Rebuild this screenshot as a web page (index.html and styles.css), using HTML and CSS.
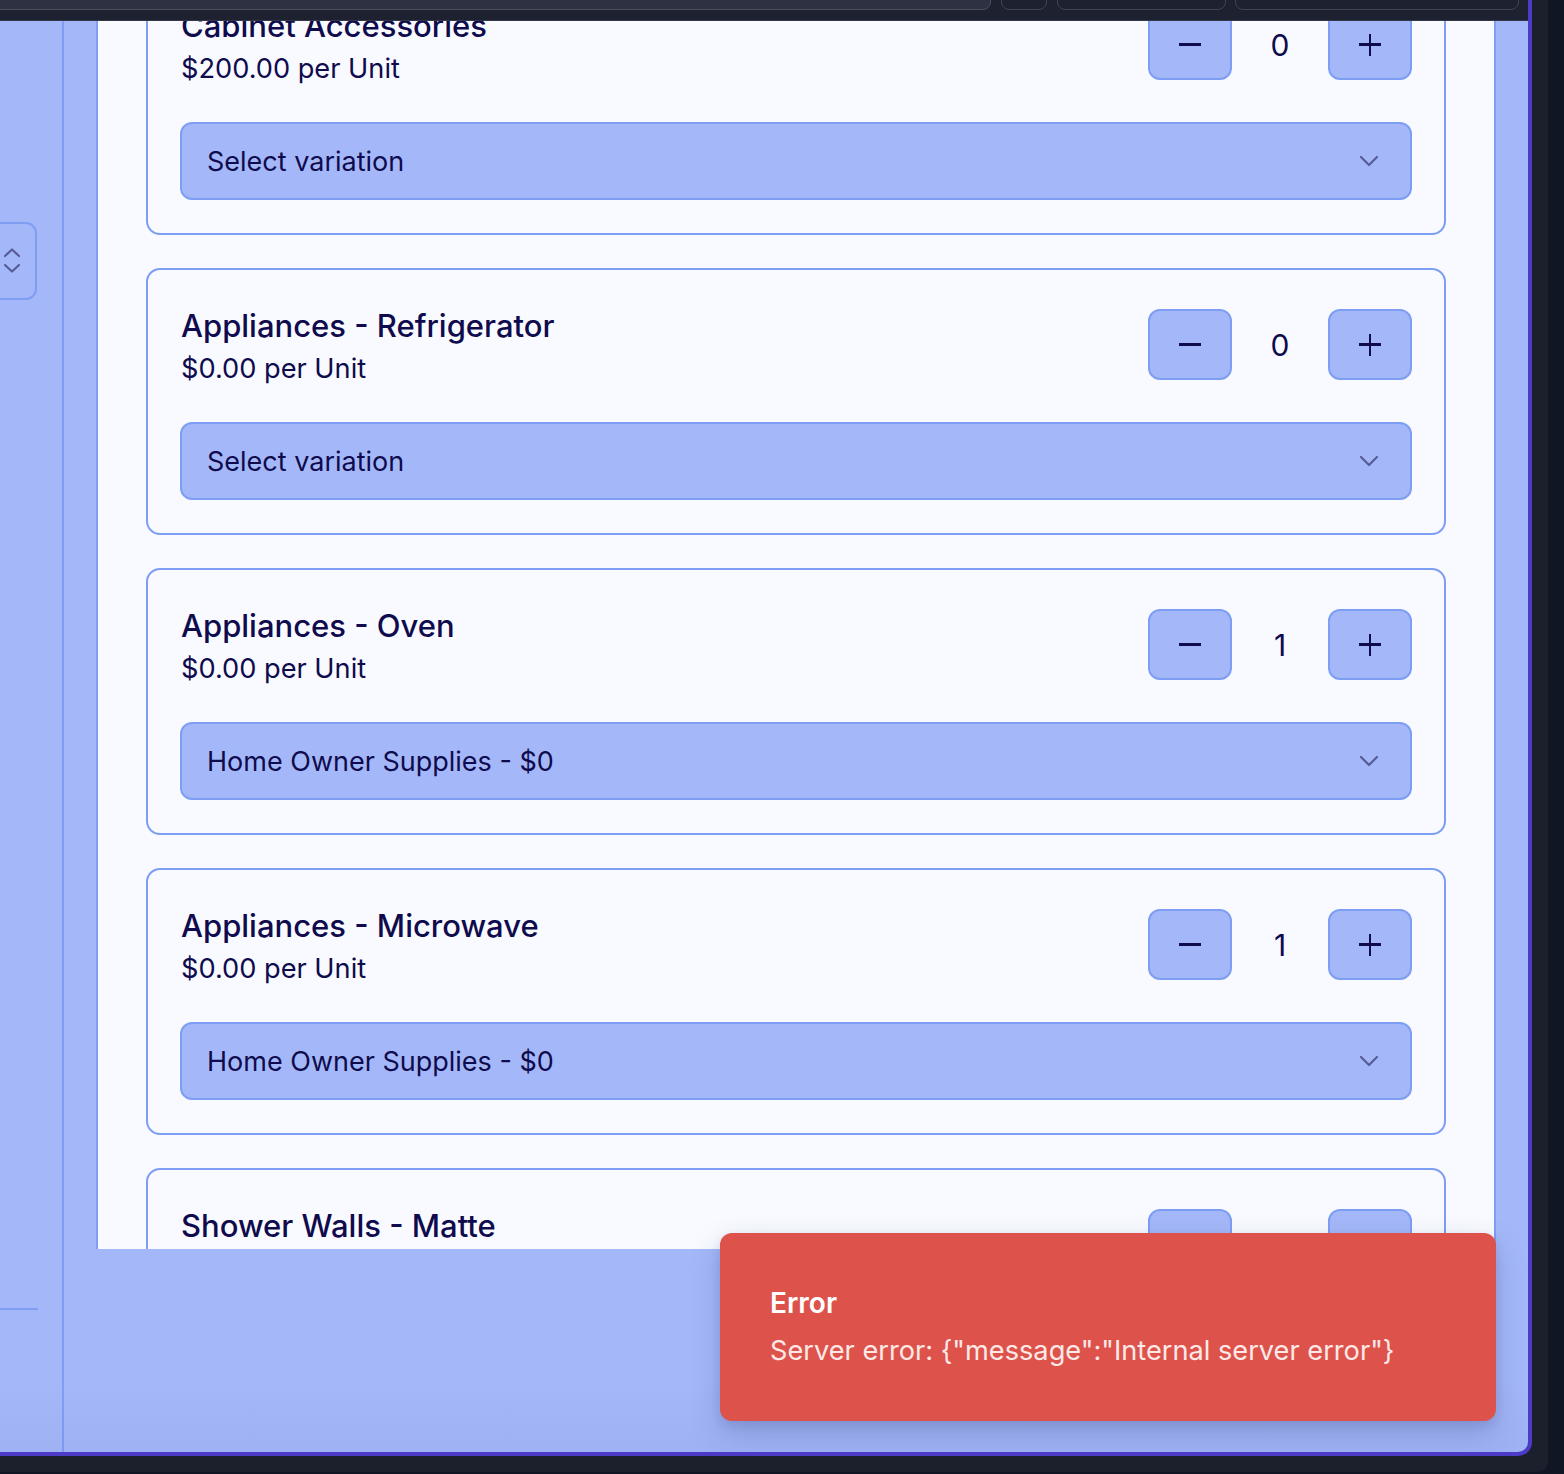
FILE: index.html
```html
<!DOCTYPE html>
<html lang="en">
<head>
<meta charset="utf-8">
<title>Order items</title>
<link rel="stylesheet" href="styles.css">
</head>
<body>
<div class="screen">
  <div class="frame">
    <div class="topbar">
      <div class="tb-box tb-wide"></div>
      <div class="tb-box tb-icon"></div>
      <div class="tb-box tb-mid"></div>
      <div class="tb-box tb-search"></div>
    </div>
    <div class="workspace">
      <aside class="sidebar">
        <div class="side-select">
          <svg class="updown" width="18" height="26" viewBox="0 0 18 26" aria-hidden="true">
            <path d="M2 8 L9 1.5 L16 8" fill="none" stroke="#585c96" stroke-width="2.2" stroke-linecap="round" stroke-linejoin="round"/>
            <path d="M2 17 L9 23.5 L16 17" fill="none" stroke="#585c96" stroke-width="2.2" stroke-linecap="round" stroke-linejoin="round"/>
          </svg>
        </div>
        <div class="side-rule"></div>
      </aside>
      <div class="gutter"></div>
      <main class="panel">
        <div class="item-list">
          <section class="item-card">
            <div class="item-head">
              <div class="item-info">
                <h3 class="item-title">Cabinet Accessories</h3>
                <p class="item-price">$200.00 per Unit</p>
              </div>
              <div class="stepper">
                <button class="step-btn" aria-label="Decrease"><span class="minus"></span></button>
                <span class="qty">0</span>
                <button class="step-btn" aria-label="Increase"><span class="plus"></span></button>
              </div>
            </div>
            <div class="variation">
              <span>Select variation</span>
              <svg class="chev" width="20" height="12" viewBox="0 0 20 12" aria-hidden="true"><path d="M2 2 L10 10 L18 2" fill="none" stroke="#585c96" stroke-width="2.2" stroke-linecap="round" stroke-linejoin="round"/></svg>
            </div>
          </section>

          <section class="item-card">
            <div class="item-head">
              <div class="item-info">
                <h3 class="item-title">Appliances - Refrigerator</h3>
                <p class="item-price">$0.00 per Unit</p>
              </div>
              <div class="stepper">
                <button class="step-btn" aria-label="Decrease"><span class="minus"></span></button>
                <span class="qty">0</span>
                <button class="step-btn" aria-label="Increase"><span class="plus"></span></button>
              </div>
            </div>
            <div class="variation">
              <span>Select variation</span>
              <svg class="chev" width="20" height="12" viewBox="0 0 20 12" aria-hidden="true"><path d="M2 2 L10 10 L18 2" fill="none" stroke="#585c96" stroke-width="2.2" stroke-linecap="round" stroke-linejoin="round"/></svg>
            </div>
          </section>

          <section class="item-card">
            <div class="item-head">
              <div class="item-info">
                <h3 class="item-title">Appliances - Oven</h3>
                <p class="item-price">$0.00 per Unit</p>
              </div>
              <div class="stepper">
                <button class="step-btn" aria-label="Decrease"><span class="minus"></span></button>
                <span class="qty">1</span>
                <button class="step-btn" aria-label="Increase"><span class="plus"></span></button>
              </div>
            </div>
            <div class="variation">
              <span>Home Owner Supplies - $0</span>
              <svg class="chev" width="20" height="12" viewBox="0 0 20 12" aria-hidden="true"><path d="M2 2 L10 10 L18 2" fill="none" stroke="#585c96" stroke-width="2.2" stroke-linecap="round" stroke-linejoin="round"/></svg>
            </div>
          </section>

          <section class="item-card">
            <div class="item-head">
              <div class="item-info">
                <h3 class="item-title">Appliances - Microwave</h3>
                <p class="item-price">$0.00 per Unit</p>
              </div>
              <div class="stepper">
                <button class="step-btn" aria-label="Decrease"><span class="minus"></span></button>
                <span class="qty">1</span>
                <button class="step-btn" aria-label="Increase"><span class="plus"></span></button>
              </div>
            </div>
            <div class="variation">
              <span>Home Owner Supplies - $0</span>
              <svg class="chev" width="20" height="12" viewBox="0 0 20 12" aria-hidden="true"><path d="M2 2 L10 10 L18 2" fill="none" stroke="#585c96" stroke-width="2.2" stroke-linecap="round" stroke-linejoin="round"/></svg>
            </div>
          </section>

          <section class="item-card">
            <div class="item-head">
              <div class="item-info">
                <h3 class="item-title">Shower Walls - Matte</h3>
                <p class="item-price">$0.00 per Unit</p>
              </div>
              <div class="stepper">
                <button class="step-btn" aria-label="Decrease"><span class="minus"></span></button>
                <span class="qty">0</span>
                <button class="step-btn" aria-label="Increase"><span class="plus"></span></button>
              </div>
            </div>
          </section>
        </div>
      </main>
      <div class="rightbar"></div>
    </div>
    <div class="bottom-shade"></div>
    <div class="toast" role="alert">
      <p class="toast-title">Error</p>
      <p class="toast-msg">Server error: {"message":"Internal server error"}</p>
    </div>
  </div>
</div>
</body>
</html>
```

FILE: styles.css
```css
* { box-sizing: border-box; }

html, body {
  margin: 0;
  padding: 0;
}

body {
  width: 1564px;
  height: 1474px;
  overflow: hidden;
  background: #111624;
  font-family: "Inter", "Noto Sans", "Liberation Sans", sans-serif;
  color: #0f0b4d;
}

.screen {
  width: 1548px;
  height: 1472px;
  background: #1c202d;
  border-bottom-right-radius: 10px;
}

.frame {
  position: relative;
  width: 1532px;
  height: 1456px;
  background: #a4b8f9;
  border-right: 4px solid #4b3bc6;
  border-bottom: 4px solid #4b3bc6;
  border-bottom-right-radius: 14px;
  overflow: hidden;
  display: flex;
  flex-direction: column;
}

/* ---------- top bar ---------- */
.topbar {
  position: relative;
  z-index: 3;
  height: 21px;
  flex: none;
  background: #1e2130;
  border-bottom: 1px solid #333747;
  display: flex;
  align-items: flex-start;
  gap: 10px;
}

.tb-box {
  height: 30px;
  margin-top: -20px;
  border: 1px solid #3f4356;
  border-radius: 8px;
  background: #1e2130;
}

.tb-wide {
  width: 1002px;
  margin-left: -11px;
  background: #2d3142;
  border-color: #4a4e60;
}

.tb-icon { width: 46px; }
.tb-mid { width: 169px; }
.tb-search { width: 284px; margin-left: -1px; }

/* ---------- workspace ---------- */
.workspace {
  flex: 1;
  display: flex;
  align-items: flex-start;
  min-height: 0;
}

.sidebar {
  width: 64px;
  height: 1431px;
  flex: none;
  border-right: 2px solid #7e9ef4;
  padding-top: 201px;
}

.side-select {
  width: 50px;
  height: 78px;
  margin-left: -13px;
  border: 2px solid #7e9ef4;
  border-radius: 11px;
  display: flex;
  align-items: center;
  padding-left: 14px;
}

.updown { display: block; }

.side-rule {
  width: 38px;
  height: 2px;
  margin-top: 1008px;
  background: #7e9ef4;
}

.gutter {
  width: 32px;
  flex: none;
}

.panel {
  width: 1400px;
  height: 1228px;
  flex: none;
  background: #f8faff;
  border-left: 2px solid #7e9ef4;
  border-right: 2px solid #7e9ef4;
  overflow: hidden;
  padding: 0 48px;
}

.rightbar {
  width: 32px;
  flex: none;
}

/* ---------- item cards ---------- */
.item-list {
  margin-top: -53px;
  display: flex;
  flex-direction: column;
  gap: 33px;
}

.item-card {
  border: 2px solid #7e9ef4;
  border-radius: 14px;
  padding: 35px 32px 33px;
  display: flex;
  flex-direction: column;
  gap: 33px;
  background: #f8faff;
}

.item-head {
  display: flex;
  justify-content: space-between;
  align-items: flex-start;
  height: 84px;
}

.item-info { padding-left: 1px; }

.item-title {
  margin: 0;
  font-size: 31px;
  line-height: 42px;
  font-weight: 500;
  color: #0f0b4d;
}

.item-price {
  margin: 1px 0 0;
  font-size: 27.2px;
  line-height: 42px;
  font-weight: 400;
  color: #0f0b4d;
}

.stepper {
  display: flex;
  align-items: center;
  margin-top: 4px;
}

.step-btn {
  width: 84px;
  height: 71px;
  background: #a4b8f9;
  border: 2px solid #7e9ef4;
  border-radius: 12px;
  padding: 0;
  display: flex;
  align-items: center;
  justify-content: center;
  position: relative;
}

.minus {
  display: block;
  width: 22px;
  height: 2.5px;
  background: #0f0b4d;
}

.plus {
  display: block;
  width: 22px;
  height: 22px;
  position: relative;
}

.plus::before,
.plus::after {
  content: "";
  position: absolute;
  background: #0f0b4d;
}

.plus::before {
  left: 0;
  top: 9.75px;
  width: 22px;
  height: 2.5px;
}

.plus::after {
  top: 0;
  left: 9.75px;
  width: 2.5px;
  height: 22px;
}

.qty {
  width: 96px;
  text-align: center;
  font-size: 30px;
  line-height: 40px;
  color: #0f0b4d;
}

.variation {
  height: 78px;
  background: #a4b8f9;
  border: 2px solid #7e9ef4;
  border-radius: 12px;
  padding: 0 31px 0 25px;
  display: flex;
  align-items: center;
  justify-content: space-between;
  font-size: 27px;
  color: #0f0b4d;
}

.chev { display: block; }

/* ---------- overlays ---------- */
.bottom-shade {
  position: absolute;
  left: 0;
  right: 0;
  bottom: 0;
  height: 70px;
  background: linear-gradient(to bottom, rgba(90, 100, 170, 0), rgba(90, 100, 170, 0.08));
  pointer-events: none;
}

.toast {
  position: absolute;
  left: 720px;
  top: 1233px;
  width: 776px;
  height: 188px;
  background: #dd534c;
  border-radius: 12px;
  box-shadow: 0 12px 30px rgba(40, 50, 110, 0.22), 0 4px 10px rgba(40, 50, 110, 0.12);
  padding: 50px 50px 0;
  color: #ffffff;
  z-index: 4;
}

.toast-title {
  margin: 0;
  font-size: 28px;
  line-height: 40px;
  font-weight: 600;
}

.toast-msg {
  margin: 8px 0 0;
  font-size: 27.2px;
  line-height: 40px;
  font-weight: 400;
  color: #fde9e7;
}
```
